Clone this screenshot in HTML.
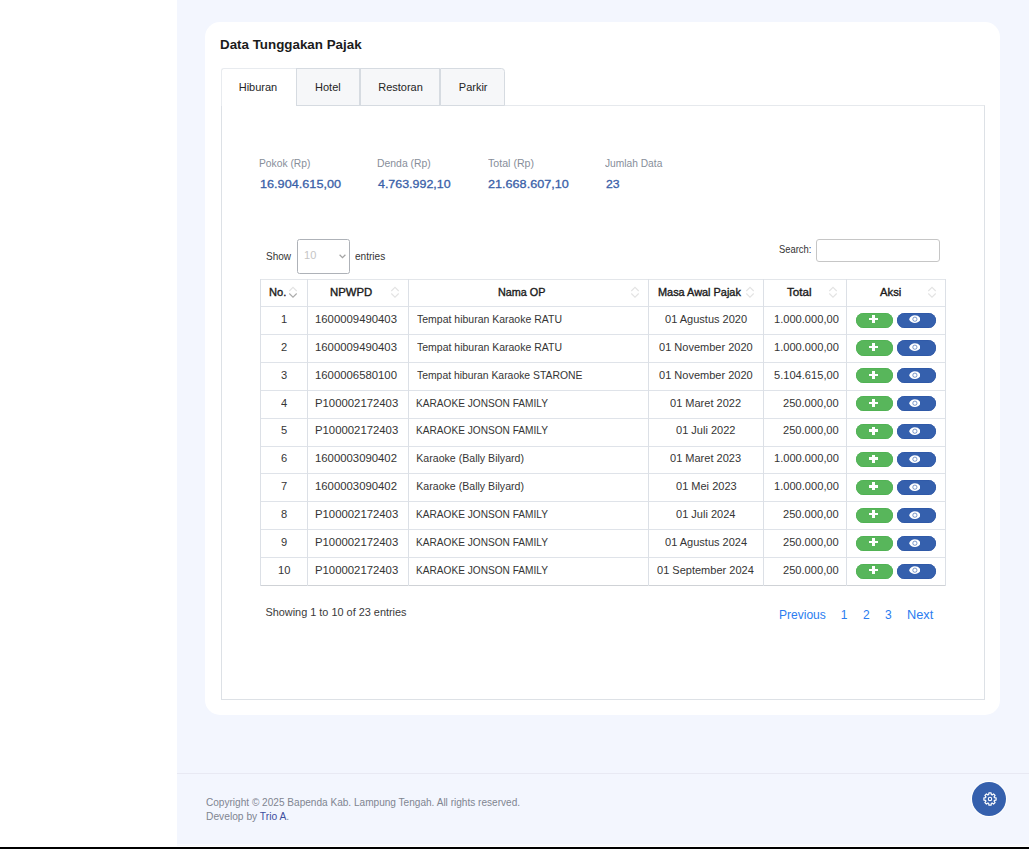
<!DOCTYPE html>
<html><head><meta charset="utf-8"><style>
html,body{margin:0;padding:0;width:1029px;height:849px;overflow:hidden;background:#fff;position:relative}
.t{position:absolute;white-space:nowrap;font-family:"Liberation Sans",sans-serif}
</style></head><body>
<div style="position:absolute;left:0px;top:0px;width:177px;height:849px;background:#fff"></div>
<div style="position:absolute;left:177px;top:0px;width:852px;height:844px;background:#f3f6fe"></div>
<div style="position:absolute;left:177px;top:844px;width:852px;height:1px;background:#fafbff"></div>
<div style="position:absolute;left:177px;top:845px;width:852px;height:1px;background:#f7f8fc"></div>
<div style="position:absolute;left:0px;top:846px;width:1029px;height:1px;background:#fff"></div>
<div style="position:absolute;left:0px;top:847px;width:1029px;height:2px;background:#000"></div>
<div style="position:absolute;left:205px;top:22px;width:795px;height:693px;background:#fff;border-radius:15px"></div>
<div class="t" style="left:220.40px;top:38.00px;font-size:13.5px;line-height:13.5px;color:#1b1b1b;font-weight:bold;transform:scaleX(0.99);transform-origin:0 0;">Data Tunggakan Pajak</div>
<div style="position:absolute;left:221px;top:105px;width:764px;height:595px;border:1px solid #dde1e6;border-top-color:#e6e9ed;box-sizing:border-box"></div>
<div style="position:absolute;left:221px;top:68px;width:76px;height:38px;background:#fff;border:1px solid #e8ebef;border-bottom:none;border-right:none;border-radius:3px 0 0 0;box-sizing:border-box"></div>
<div style="position:absolute;left:296px;top:68px;width:64px;height:38px;background:#f6f7f9;border:1px solid #d6dbe1;box-sizing:border-box;border-radius:0"></div>
<div style="position:absolute;left:360px;top:68px;width:80px;height:38px;background:#f6f7f9;border:1px solid #d6dbe1;box-sizing:border-box;border-radius:0"></div>
<div style="position:absolute;left:440px;top:68px;width:65px;height:38px;background:#f6f7f9;border:1px solid #d6dbe1;box-sizing:border-box;border-radius:0 3.5px 0 0"></div>
<div class="t" style="left:238.72px;top:82.00px;font-size:11px;line-height:11px;color:#252525;font-weight:normal;">Hiburan</div>
<div class="t" style="left:315.02px;top:82.00px;font-size:11px;line-height:11px;color:#252525;font-weight:normal;">Hotel</div>
<div class="t" style="left:378.22px;top:82.00px;font-size:11px;line-height:11px;color:#252525;font-weight:normal;">Restoran</div>
<div class="t" style="left:458.82px;top:82.00px;font-size:11px;line-height:11px;color:#252525;font-weight:normal;">Parkir</div>
<div class="t" style="left:259.38px;top:159.00px;font-size:10.4px;line-height:10.4px;color:#878e9a;font-weight:normal;transform:scaleX(0.9894937269418248);transform-origin:0 0;">Pokok (Rp)</div>
<div class="t" style="left:259.96px;top:179.00px;font-size:11.5px;line-height:11.5px;color:#3a5fa8;font-weight:normal;transform:scaleX(1.1020164007253803);transform-origin:0 0;-webkit-text-stroke:0.3px #3a5fa8;">16.904.615,00</div>
<div class="t" style="left:376.97px;top:159.00px;font-size:10.4px;line-height:10.4px;color:#878e9a;font-weight:normal;transform:scaleX(1.002410558724552);transform-origin:0 0;">Denda (Rp)</div>
<div class="t" style="left:378.20px;top:179.00px;font-size:11.5px;line-height:11.5px;color:#3a5fa8;font-weight:normal;transform:scaleX(1.0811831608471705);transform-origin:0 0;-webkit-text-stroke:0.3px #3a5fa8;">4.763.992,10</div>
<div class="t" style="left:487.99px;top:159.00px;font-size:10.4px;line-height:10.4px;color:#878e9a;font-weight:normal;transform:scaleX(1.0221295705765452);transform-origin:0 0;">Total (Rp)</div>
<div class="t" style="left:487.72px;top:179.00px;font-size:11.5px;line-height:11.5px;color:#3a5fa8;font-weight:normal;transform:scaleX(1.0985228530948044);transform-origin:0 0;-webkit-text-stroke:0.3px #3a5fa8;">21.668.607,10</div>
<div class="t" style="left:605.30px;top:159.00px;font-size:10.4px;line-height:10.4px;color:#878e9a;font-weight:normal;transform:scaleX(0.9825234498704609);transform-origin:0 0;">Jumlah Data</div>
<div class="t" style="left:605.54px;top:179.00px;font-size:11.5px;line-height:11.5px;color:#3a5fa8;font-weight:normal;transform:scaleX(1.0592545330714989);transform-origin:0 0;-webkit-text-stroke:0.3px #3a5fa8;">23</div>
<div class="t" style="left:265.50px;top:251.00px;font-size:10.5px;line-height:10.5px;color:#333;font-weight:normal;transform:scaleX(0.955);transform-origin:0 0;">Show</div>
<div style="position:absolute;left:297px;top:239px;width:53px;height:34.5px;border:1px solid #aeb2b8;border-radius:2.5px;box-sizing:border-box;background:#fff"></div>
<div class="t" style="left:303.53px;top:250.00px;font-size:10.5px;line-height:10.5px;color:#c5c5c5;font-weight:normal;transform:scaleX(1.05);transform-origin:0 0;">10</div>
<svg style="position:absolute;left:339px;top:254px" width="7" height="5" viewBox="0 0 7 5"><path d="M0.6 0.8 L3.5 3.7 L6.4 0.8" fill="none" stroke="#a4a4a4" stroke-width="1.25"/></svg>
<div class="t" style="left:354.50px;top:251.00px;font-size:10.5px;line-height:10.5px;color:#333;font-weight:normal;transform:scaleX(0.96);transform-origin:0 0;">entries</div>
<div class="t" style="left:778.52px;top:245.00px;font-size:10.3px;line-height:10.3px;color:#333;font-weight:normal;transform:scaleX(0.9109684652445705);transform-origin:0 0;">Search:</div>
<div style="position:absolute;left:816px;top:239px;width:124px;height:22.5px;border:1px solid #c6c6c6;border-radius:3px;box-sizing:border-box;background:#fff"></div>
<div style="position:absolute;left:260px;top:279px;width:686px;height:1px;background:#e3e6ea"></div>
<div style="position:absolute;left:260px;top:306px;width:686px;height:1px;background:#dfe3e9"></div>
<div style="position:absolute;left:260px;top:334px;width:686px;height:1px;background:#dfe3e9"></div>
<div style="position:absolute;left:260px;top:362px;width:686px;height:1px;background:#dfe3e9"></div>
<div style="position:absolute;left:260px;top:390px;width:686px;height:1px;background:#dfe3e9"></div>
<div style="position:absolute;left:260px;top:418px;width:686px;height:1px;background:#dfe3e9"></div>
<div style="position:absolute;left:260px;top:446px;width:686px;height:1px;background:#dfe3e9"></div>
<div style="position:absolute;left:260px;top:473px;width:686px;height:1px;background:#dfe3e9"></div>
<div style="position:absolute;left:260px;top:501px;width:686px;height:1px;background:#dfe3e9"></div>
<div style="position:absolute;left:260px;top:529px;width:686px;height:1px;background:#dfe3e9"></div>
<div style="position:absolute;left:260px;top:557px;width:686px;height:1px;background:#dfe3e9"></div>
<div style="position:absolute;left:260px;top:585px;width:686px;height:1px;background:#cfd2d6"></div>
<div style="position:absolute;left:260px;top:279px;width:1px;height:307px;background:#dce0e6"></div>
<div style="position:absolute;left:307px;top:279px;width:1px;height:307px;background:#dce0e6"></div>
<div style="position:absolute;left:408px;top:279px;width:1px;height:307px;background:#dce0e6"></div>
<div style="position:absolute;left:648px;top:279px;width:1px;height:307px;background:#dce0e6"></div>
<div style="position:absolute;left:763px;top:279px;width:1px;height:307px;background:#dce0e6"></div>
<div style="position:absolute;left:846px;top:279px;width:1px;height:307px;background:#dce0e6"></div>
<div style="position:absolute;left:945px;top:279px;width:1px;height:307px;background:#dce0e6"></div>
<div class="t" style="left:269.49px;top:288.00px;font-size:10.3px;line-height:10.3px;color:#1b1b1b;font-weight:normal;transform:scaleX(1.0769457290267523);transform-origin:0 0;-webkit-text-stroke:0.35px #1b1b1b;">No.</div>
<div class="t" style="left:330.17px;top:288.00px;font-size:10.3px;line-height:10.3px;color:#1b1b1b;font-weight:normal;transform:scaleX(1.1030204962243795);transform-origin:0 0;-webkit-text-stroke:0.35px #1b1b1b;">NPWPD</div>
<div class="t" style="left:498.11px;top:288.00px;font-size:10.3px;line-height:10.3px;color:#1b1b1b;font-weight:normal;transform:scaleX(1.0475880854469268);transform-origin:0 0;-webkit-text-stroke:0.35px #1b1b1b;">Nama OP</div>
<div class="t" style="left:658.00px;top:288.00px;font-size:10.3px;line-height:10.3px;color:#1b1b1b;font-weight:normal;transform:scaleX(1.0589922541633425);transform-origin:0 0;-webkit-text-stroke:0.35px #1b1b1b;">Masa Awal Pajak</div>
<div class="t" style="left:786.74px;top:288.00px;font-size:10.3px;line-height:10.3px;color:#1b1b1b;font-weight:normal;transform:scaleX(1.1286245476773185);transform-origin:0 0;-webkit-text-stroke:0.35px #1b1b1b;">Total</div>
<div class="t" style="left:879.57px;top:288.00px;font-size:10.3px;line-height:10.3px;color:#1b1b1b;font-weight:normal;transform:scaleX(1.0946954309294243);transform-origin:0 0;-webkit-text-stroke:0.35px #1b1b1b;">Aksi</div>
<svg style="position:absolute;left:288px;top:286px" width="10" height="13" viewBox="0 0 10 13"><path d="M1.3 5 L5 1.3 L8.7 5" fill="none" stroke="#e3e3e3" stroke-width="1.1"/><path d="M1.3 7.5 L5 11.2 L8.7 7.5" fill="none" stroke="#ababab" stroke-width="1.1"/></svg>
<svg style="position:absolute;left:390px;top:286px" width="10" height="13" viewBox="0 0 10 13"><path d="M1.3 5 L5 1.3 L8.7 5" fill="none" stroke="#e3e3e3" stroke-width="1.1"/><path d="M1.3 7.5 L5 11.2 L8.7 7.5" fill="none" stroke="#e3e3e3" stroke-width="1.1"/></svg>
<svg style="position:absolute;left:630px;top:286px" width="10" height="13" viewBox="0 0 10 13"><path d="M1.3 5 L5 1.3 L8.7 5" fill="none" stroke="#e3e3e3" stroke-width="1.1"/><path d="M1.3 7.5 L5 11.2 L8.7 7.5" fill="none" stroke="#e3e3e3" stroke-width="1.1"/></svg>
<svg style="position:absolute;left:745px;top:286px" width="10" height="13" viewBox="0 0 10 13"><path d="M1.3 5 L5 1.3 L8.7 5" fill="none" stroke="#e3e3e3" stroke-width="1.1"/><path d="M1.3 7.5 L5 11.2 L8.7 7.5" fill="none" stroke="#e3e3e3" stroke-width="1.1"/></svg>
<svg style="position:absolute;left:828px;top:286px" width="10" height="13" viewBox="0 0 10 13"><path d="M1.3 5 L5 1.3 L8.7 5" fill="none" stroke="#e3e3e3" stroke-width="1.1"/><path d="M1.3 7.5 L5 11.2 L8.7 7.5" fill="none" stroke="#e3e3e3" stroke-width="1.1"/></svg>
<svg style="position:absolute;left:927px;top:286px" width="10" height="13" viewBox="0 0 10 13"><path d="M1.3 5 L5 1.3 L8.7 5" fill="none" stroke="#e3e3e3" stroke-width="1.1"/><path d="M1.3 7.5 L5 11.2 L8.7 7.5" fill="none" stroke="#e3e3e3" stroke-width="1.1"/></svg>
<div class="t" style="left:280.77px;top:314.00px;font-size:10.6px;line-height:10.6px;color:#353535;font-weight:normal;transform:scaleX(1.05);transform-origin:0 0;">1</div>
<div class="t" style="left:314.91px;top:314.00px;font-size:10.6px;line-height:10.6px;color:#353535;font-weight:normal;transform:scaleX(1.07);transform-origin:0 0;">1600009490403</div>
<div class="t" style="left:416.89px;top:314.00px;font-size:10.6px;line-height:10.6px;color:#353535;font-weight:normal;transform:scaleX(0.99);transform-origin:0 0;">Tempat hiburan Karaoke RATU</div>
<div class="t" style="left:664.56px;top:314.00px;font-size:10.6px;line-height:10.6px;color:#353535;font-weight:normal;transform:scaleX(1.04);transform-origin:0 0;">01 Agustus 2020</div>
<div class="t" style="left:773.64px;top:314.00px;font-size:10.6px;line-height:10.6px;color:#353535;font-weight:normal;transform:scaleX(1.048);transform-origin:0 0;">1.000.000,00</div>
<div style="position:absolute;left:855.7px;top:312.50px;width:37.5px;height:15.2px;border-radius:8px;background:#58b65b;box-shadow:inset 0 0 0 0.6px #4aae4e"></div>
<div style="position:absolute;left:896.6px;top:312.50px;width:39.7px;height:15.2px;border-radius:8px;background:#3560ad;box-shadow:inset 0 0 0 0.6px #2d55a3"></div>
<div style="position:absolute;left:871.6px;top:315.00px;width:3px;height:8px;background:#fff"></div>
<div style="position:absolute;left:868.5px;top:317.80px;width:9.3px;height:2.4px;background:#fff"></div>
<svg style="position:absolute;left:908.7px;top:315.30px" width="11.8" height="8.4" viewBox="0 0 11.8 8.4"><path d="M0.1 4.2 C1.9 -0.9 9.9 -0.9 11.7 4.2 C9.9 9.3 1.9 9.3 0.1 4.2 Z" fill="#fff"/><circle cx="5.9" cy="4.2" r="2.1" fill="none" stroke="#3560ad" stroke-opacity="0.85" stroke-width="0.75"/></svg>
<div class="t" style="left:280.88px;top:342.00px;font-size:10.6px;line-height:10.6px;color:#353535;font-weight:normal;transform:scaleX(1.05);transform-origin:0 0;">2</div>
<div class="t" style="left:314.91px;top:342.00px;font-size:10.6px;line-height:10.6px;color:#353535;font-weight:normal;transform:scaleX(1.07);transform-origin:0 0;">1600009490403</div>
<div class="t" style="left:416.89px;top:342.00px;font-size:10.6px;line-height:10.6px;color:#353535;font-weight:normal;transform:scaleX(0.99);transform-origin:0 0;">Tempat hiburan Karaoke RATU</div>
<div class="t" style="left:659.05px;top:342.00px;font-size:10.6px;line-height:10.6px;color:#353535;font-weight:normal;transform:scaleX(1.04);transform-origin:0 0;">01 November 2020</div>
<div class="t" style="left:773.64px;top:342.00px;font-size:10.6px;line-height:10.6px;color:#353535;font-weight:normal;transform:scaleX(1.048);transform-origin:0 0;">1.000.000,00</div>
<div style="position:absolute;left:855.7px;top:340.40px;width:37.5px;height:15.2px;border-radius:8px;background:#58b65b;box-shadow:inset 0 0 0 0.6px #4aae4e"></div>
<div style="position:absolute;left:896.6px;top:340.40px;width:39.7px;height:15.2px;border-radius:8px;background:#3560ad;box-shadow:inset 0 0 0 0.6px #2d55a3"></div>
<div style="position:absolute;left:871.6px;top:342.90px;width:3px;height:8px;background:#fff"></div>
<div style="position:absolute;left:868.5px;top:345.70px;width:9.3px;height:2.4px;background:#fff"></div>
<svg style="position:absolute;left:908.7px;top:343.20px" width="11.8" height="8.4" viewBox="0 0 11.8 8.4"><path d="M0.1 4.2 C1.9 -0.9 9.9 -0.9 11.7 4.2 C9.9 9.3 1.9 9.3 0.1 4.2 Z" fill="#fff"/><circle cx="5.9" cy="4.2" r="2.1" fill="none" stroke="#3560ad" stroke-opacity="0.85" stroke-width="0.75"/></svg>
<div class="t" style="left:280.94px;top:370.00px;font-size:10.6px;line-height:10.6px;color:#353535;font-weight:normal;transform:scaleX(1.05);transform-origin:0 0;">3</div>
<div class="t" style="left:314.91px;top:370.00px;font-size:10.6px;line-height:10.6px;color:#353535;font-weight:normal;transform:scaleX(1.07);transform-origin:0 0;">1600006580100</div>
<div class="t" style="left:416.89px;top:370.00px;font-size:10.6px;line-height:10.6px;color:#353535;font-weight:normal;transform:scaleX(0.98);transform-origin:0 0;">Tempat hiburan Karaoke STARONE</div>
<div class="t" style="left:659.05px;top:370.00px;font-size:10.6px;line-height:10.6px;color:#353535;font-weight:normal;transform:scaleX(1.04);transform-origin:0 0;">01 November 2020</div>
<div class="t" style="left:773.64px;top:370.00px;font-size:10.6px;line-height:10.6px;color:#353535;font-weight:normal;transform:scaleX(1.048);transform-origin:0 0;">5.104.615,00</div>
<div style="position:absolute;left:855.7px;top:368.30px;width:37.5px;height:15.2px;border-radius:8px;background:#58b65b;box-shadow:inset 0 0 0 0.6px #4aae4e"></div>
<div style="position:absolute;left:896.6px;top:368.30px;width:39.7px;height:15.2px;border-radius:8px;background:#3560ad;box-shadow:inset 0 0 0 0.6px #2d55a3"></div>
<div style="position:absolute;left:871.6px;top:370.80px;width:3px;height:8px;background:#fff"></div>
<div style="position:absolute;left:868.5px;top:373.60px;width:9.3px;height:2.4px;background:#fff"></div>
<svg style="position:absolute;left:908.7px;top:371.10px" width="11.8" height="8.4" viewBox="0 0 11.8 8.4"><path d="M0.1 4.2 C1.9 -0.9 9.9 -0.9 11.7 4.2 C9.9 9.3 1.9 9.3 0.1 4.2 Z" fill="#fff"/><circle cx="5.9" cy="4.2" r="2.1" fill="none" stroke="#3560ad" stroke-opacity="0.85" stroke-width="0.75"/></svg>
<div class="t" style="left:280.94px;top:398.00px;font-size:10.6px;line-height:10.6px;color:#353535;font-weight:normal;transform:scaleX(1.05);transform-origin:0 0;">4</div>
<div class="t" style="left:314.79px;top:398.00px;font-size:10.6px;line-height:10.6px;color:#353535;font-weight:normal;transform:scaleX(1.07);transform-origin:0 0;">P100002172403</div>
<div class="t" style="left:416.29px;top:398.00px;font-size:10.6px;line-height:10.6px;color:#353535;font-weight:normal;transform:scaleX(0.955);transform-origin:0 0;">KARAOKE JONSON FAMILY</div>
<div class="t" style="left:670.44px;top:398.00px;font-size:10.6px;line-height:10.6px;color:#353535;font-weight:normal;transform:scaleX(1.04);transform-origin:0 0;">01 Maret 2022</div>
<div class="t" style="left:782.90px;top:398.00px;font-size:10.6px;line-height:10.6px;color:#353535;font-weight:normal;transform:scaleX(1.048);transform-origin:0 0;">250.000,00</div>
<div style="position:absolute;left:855.7px;top:396.20px;width:37.5px;height:15.2px;border-radius:8px;background:#58b65b;box-shadow:inset 0 0 0 0.6px #4aae4e"></div>
<div style="position:absolute;left:896.6px;top:396.20px;width:39.7px;height:15.2px;border-radius:8px;background:#3560ad;box-shadow:inset 0 0 0 0.6px #2d55a3"></div>
<div style="position:absolute;left:871.6px;top:398.70px;width:3px;height:8px;background:#fff"></div>
<div style="position:absolute;left:868.5px;top:401.50px;width:9.3px;height:2.4px;background:#fff"></div>
<svg style="position:absolute;left:908.7px;top:399.00px" width="11.8" height="8.4" viewBox="0 0 11.8 8.4"><path d="M0.1 4.2 C1.9 -0.9 9.9 -0.9 11.7 4.2 C9.9 9.3 1.9 9.3 0.1 4.2 Z" fill="#fff"/><circle cx="5.9" cy="4.2" r="2.1" fill="none" stroke="#3560ad" stroke-opacity="0.85" stroke-width="0.75"/></svg>
<div class="t" style="left:280.88px;top:425.00px;font-size:10.6px;line-height:10.6px;color:#353535;font-weight:normal;transform:scaleX(1.05);transform-origin:0 0;">5</div>
<div class="t" style="left:314.79px;top:425.00px;font-size:10.6px;line-height:10.6px;color:#353535;font-weight:normal;transform:scaleX(1.07);transform-origin:0 0;">P100002172403</div>
<div class="t" style="left:416.29px;top:425.00px;font-size:10.6px;line-height:10.6px;color:#353535;font-weight:normal;transform:scaleX(0.955);transform-origin:0 0;">KARAOKE JONSON FAMILY</div>
<div class="t" style="left:676.26px;top:425.00px;font-size:10.6px;line-height:10.6px;color:#353535;font-weight:normal;transform:scaleX(1.04);transform-origin:0 0;">01 Juli 2022</div>
<div class="t" style="left:782.90px;top:425.00px;font-size:10.6px;line-height:10.6px;color:#353535;font-weight:normal;transform:scaleX(1.048);transform-origin:0 0;">250.000,00</div>
<div style="position:absolute;left:855.7px;top:424.10px;width:37.5px;height:15.2px;border-radius:8px;background:#58b65b;box-shadow:inset 0 0 0 0.6px #4aae4e"></div>
<div style="position:absolute;left:896.6px;top:424.10px;width:39.7px;height:15.2px;border-radius:8px;background:#3560ad;box-shadow:inset 0 0 0 0.6px #2d55a3"></div>
<div style="position:absolute;left:871.6px;top:426.60px;width:3px;height:8px;background:#fff"></div>
<div style="position:absolute;left:868.5px;top:429.40px;width:9.3px;height:2.4px;background:#fff"></div>
<svg style="position:absolute;left:908.7px;top:426.90px" width="11.8" height="8.4" viewBox="0 0 11.8 8.4"><path d="M0.1 4.2 C1.9 -0.9 9.9 -0.9 11.7 4.2 C9.9 9.3 1.9 9.3 0.1 4.2 Z" fill="#fff"/><circle cx="5.9" cy="4.2" r="2.1" fill="none" stroke="#3560ad" stroke-opacity="0.85" stroke-width="0.75"/></svg>
<div class="t" style="left:280.83px;top:453.00px;font-size:10.6px;line-height:10.6px;color:#353535;font-weight:normal;transform:scaleX(1.05);transform-origin:0 0;">6</div>
<div class="t" style="left:314.91px;top:453.00px;font-size:10.6px;line-height:10.6px;color:#353535;font-weight:normal;transform:scaleX(1.07);transform-origin:0 0;">1600003090402</div>
<div class="t" style="left:416.25px;top:453.00px;font-size:10.6px;line-height:10.6px;color:#353535;font-weight:normal;">Karaoke (Bally Bilyard)</div>
<div class="t" style="left:670.39px;top:453.00px;font-size:10.6px;line-height:10.6px;color:#353535;font-weight:normal;transform:scaleX(1.04);transform-origin:0 0;">01 Maret 2023</div>
<div class="t" style="left:773.64px;top:453.00px;font-size:10.6px;line-height:10.6px;color:#353535;font-weight:normal;transform:scaleX(1.048);transform-origin:0 0;">1.000.000,00</div>
<div style="position:absolute;left:855.7px;top:452.00px;width:37.5px;height:15.2px;border-radius:8px;background:#58b65b;box-shadow:inset 0 0 0 0.6px #4aae4e"></div>
<div style="position:absolute;left:896.6px;top:452.00px;width:39.7px;height:15.2px;border-radius:8px;background:#3560ad;box-shadow:inset 0 0 0 0.6px #2d55a3"></div>
<div style="position:absolute;left:871.6px;top:454.50px;width:3px;height:8px;background:#fff"></div>
<div style="position:absolute;left:868.5px;top:457.30px;width:9.3px;height:2.4px;background:#fff"></div>
<svg style="position:absolute;left:908.7px;top:454.80px" width="11.8" height="8.4" viewBox="0 0 11.8 8.4"><path d="M0.1 4.2 C1.9 -0.9 9.9 -0.9 11.7 4.2 C9.9 9.3 1.9 9.3 0.1 4.2 Z" fill="#fff"/><circle cx="5.9" cy="4.2" r="2.1" fill="none" stroke="#3560ad" stroke-opacity="0.85" stroke-width="0.75"/></svg>
<div class="t" style="left:280.88px;top:481.00px;font-size:10.6px;line-height:10.6px;color:#353535;font-weight:normal;transform:scaleX(1.05);transform-origin:0 0;">7</div>
<div class="t" style="left:314.91px;top:481.00px;font-size:10.6px;line-height:10.6px;color:#353535;font-weight:normal;transform:scaleX(1.07);transform-origin:0 0;">1600003090402</div>
<div class="t" style="left:416.25px;top:481.00px;font-size:10.6px;line-height:10.6px;color:#353535;font-weight:normal;">Karaoke (Bally Bilyard)</div>
<div class="t" style="left:675.60px;top:481.00px;font-size:10.6px;line-height:10.6px;color:#353535;font-weight:normal;transform:scaleX(1.04);transform-origin:0 0;">01 Mei 2023</div>
<div class="t" style="left:773.64px;top:481.00px;font-size:10.6px;line-height:10.6px;color:#353535;font-weight:normal;transform:scaleX(1.048);transform-origin:0 0;">1.000.000,00</div>
<div style="position:absolute;left:855.7px;top:479.90px;width:37.5px;height:15.2px;border-radius:8px;background:#58b65b;box-shadow:inset 0 0 0 0.6px #4aae4e"></div>
<div style="position:absolute;left:896.6px;top:479.90px;width:39.7px;height:15.2px;border-radius:8px;background:#3560ad;box-shadow:inset 0 0 0 0.6px #2d55a3"></div>
<div style="position:absolute;left:871.6px;top:482.40px;width:3px;height:8px;background:#fff"></div>
<div style="position:absolute;left:868.5px;top:485.20px;width:9.3px;height:2.4px;background:#fff"></div>
<svg style="position:absolute;left:908.7px;top:482.70px" width="11.8" height="8.4" viewBox="0 0 11.8 8.4"><path d="M0.1 4.2 C1.9 -0.9 9.9 -0.9 11.7 4.2 C9.9 9.3 1.9 9.3 0.1 4.2 Z" fill="#fff"/><circle cx="5.9" cy="4.2" r="2.1" fill="none" stroke="#3560ad" stroke-opacity="0.85" stroke-width="0.75"/></svg>
<div class="t" style="left:280.88px;top:509.00px;font-size:10.6px;line-height:10.6px;color:#353535;font-weight:normal;transform:scaleX(1.05);transform-origin:0 0;">8</div>
<div class="t" style="left:314.79px;top:509.00px;font-size:10.6px;line-height:10.6px;color:#353535;font-weight:normal;transform:scaleX(1.07);transform-origin:0 0;">P100002172403</div>
<div class="t" style="left:416.29px;top:509.00px;font-size:10.6px;line-height:10.6px;color:#353535;font-weight:normal;transform:scaleX(0.955);transform-origin:0 0;">KARAOKE JONSON FAMILY</div>
<div class="t" style="left:676.15px;top:509.00px;font-size:10.6px;line-height:10.6px;color:#353535;font-weight:normal;transform:scaleX(1.04);transform-origin:0 0;">01 Juli 2024</div>
<div class="t" style="left:782.90px;top:509.00px;font-size:10.6px;line-height:10.6px;color:#353535;font-weight:normal;transform:scaleX(1.048);transform-origin:0 0;">250.000,00</div>
<div style="position:absolute;left:855.7px;top:507.80px;width:37.5px;height:15.2px;border-radius:8px;background:#58b65b;box-shadow:inset 0 0 0 0.6px #4aae4e"></div>
<div style="position:absolute;left:896.6px;top:507.80px;width:39.7px;height:15.2px;border-radius:8px;background:#3560ad;box-shadow:inset 0 0 0 0.6px #2d55a3"></div>
<div style="position:absolute;left:871.6px;top:510.30px;width:3px;height:8px;background:#fff"></div>
<div style="position:absolute;left:868.5px;top:513.10px;width:9.3px;height:2.4px;background:#fff"></div>
<svg style="position:absolute;left:908.7px;top:510.60px" width="11.8" height="8.4" viewBox="0 0 11.8 8.4"><path d="M0.1 4.2 C1.9 -0.9 9.9 -0.9 11.7 4.2 C9.9 9.3 1.9 9.3 0.1 4.2 Z" fill="#fff"/><circle cx="5.9" cy="4.2" r="2.1" fill="none" stroke="#3560ad" stroke-opacity="0.85" stroke-width="0.75"/></svg>
<div class="t" style="left:280.94px;top:537.00px;font-size:10.6px;line-height:10.6px;color:#353535;font-weight:normal;transform:scaleX(1.05);transform-origin:0 0;">9</div>
<div class="t" style="left:314.79px;top:537.00px;font-size:10.6px;line-height:10.6px;color:#353535;font-weight:normal;transform:scaleX(1.07);transform-origin:0 0;">P100002172403</div>
<div class="t" style="left:416.29px;top:537.00px;font-size:10.6px;line-height:10.6px;color:#353535;font-weight:normal;transform:scaleX(0.955);transform-origin:0 0;">KARAOKE JONSON FAMILY</div>
<div class="t" style="left:664.51px;top:537.00px;font-size:10.6px;line-height:10.6px;color:#353535;font-weight:normal;transform:scaleX(1.04);transform-origin:0 0;">01 Agustus 2024</div>
<div class="t" style="left:782.90px;top:537.00px;font-size:10.6px;line-height:10.6px;color:#353535;font-weight:normal;transform:scaleX(1.048);transform-origin:0 0;">250.000,00</div>
<div style="position:absolute;left:855.7px;top:535.70px;width:37.5px;height:15.2px;border-radius:8px;background:#58b65b;box-shadow:inset 0 0 0 0.6px #4aae4e"></div>
<div style="position:absolute;left:896.6px;top:535.70px;width:39.7px;height:15.2px;border-radius:8px;background:#3560ad;box-shadow:inset 0 0 0 0.6px #2d55a3"></div>
<div style="position:absolute;left:871.6px;top:538.20px;width:3px;height:8px;background:#fff"></div>
<div style="position:absolute;left:868.5px;top:541.00px;width:9.3px;height:2.4px;background:#fff"></div>
<svg style="position:absolute;left:908.7px;top:538.50px" width="11.8" height="8.4" viewBox="0 0 11.8 8.4"><path d="M0.1 4.2 C1.9 -0.9 9.9 -0.9 11.7 4.2 C9.9 9.3 1.9 9.3 0.1 4.2 Z" fill="#fff"/><circle cx="5.9" cy="4.2" r="2.1" fill="none" stroke="#3560ad" stroke-opacity="0.85" stroke-width="0.75"/></svg>
<div class="t" style="left:277.62px;top:565.00px;font-size:10.6px;line-height:10.6px;color:#353535;font-weight:normal;transform:scaleX(1.05);transform-origin:0 0;">10</div>
<div class="t" style="left:314.79px;top:565.00px;font-size:10.6px;line-height:10.6px;color:#353535;font-weight:normal;transform:scaleX(1.07);transform-origin:0 0;">P100002172403</div>
<div class="t" style="left:416.29px;top:565.00px;font-size:10.6px;line-height:10.6px;color:#353535;font-weight:normal;transform:scaleX(0.955);transform-origin:0 0;">KARAOKE JONSON FAMILY</div>
<div class="t" style="left:657.46px;top:565.00px;font-size:10.6px;line-height:10.6px;color:#353535;font-weight:normal;transform:scaleX(1.04);transform-origin:0 0;">01 September 2024</div>
<div class="t" style="left:782.90px;top:565.00px;font-size:10.6px;line-height:10.6px;color:#353535;font-weight:normal;transform:scaleX(1.048);transform-origin:0 0;">250.000,00</div>
<div style="position:absolute;left:855.7px;top:563.60px;width:37.5px;height:15.2px;border-radius:8px;background:#58b65b;box-shadow:inset 0 0 0 0.6px #4aae4e"></div>
<div style="position:absolute;left:896.6px;top:563.60px;width:39.7px;height:15.2px;border-radius:8px;background:#3560ad;box-shadow:inset 0 0 0 0.6px #2d55a3"></div>
<div style="position:absolute;left:871.6px;top:566.10px;width:3px;height:8px;background:#fff"></div>
<div style="position:absolute;left:868.5px;top:568.90px;width:9.3px;height:2.4px;background:#fff"></div>
<svg style="position:absolute;left:908.7px;top:566.40px" width="11.8" height="8.4" viewBox="0 0 11.8 8.4"><path d="M0.1 4.2 C1.9 -0.9 9.9 -0.9 11.7 4.2 C9.9 9.3 1.9 9.3 0.1 4.2 Z" fill="#fff"/><circle cx="5.9" cy="4.2" r="2.1" fill="none" stroke="#3560ad" stroke-opacity="0.85" stroke-width="0.75"/></svg>
<div class="t" style="left:265.46px;top:607.00px;font-size:10.9px;line-height:10.9px;color:#3a3a3a;font-weight:normal;">Showing 1 to 10 of 23 entries</div>
<div class="t" style="left:778.64px;top:609.00px;font-size:12px;line-height:12px;color:#2a7cf0;font-weight:normal;transform:scaleX(1.0029205929354714);transform-origin:0 0;">Previous</div>
<div class="t" style="left:840.86px;top:609.00px;font-size:12px;line-height:12px;color:#2a7cf0;font-weight:normal;">1</div>
<div class="t" style="left:863.00px;top:609.00px;font-size:12px;line-height:12px;color:#2a7cf0;font-weight:normal;">2</div>
<div class="t" style="left:885.04px;top:609.00px;font-size:12px;line-height:12px;color:#2a7cf0;font-weight:normal;">3</div>
<div class="t" style="left:907.18px;top:609.00px;font-size:12px;line-height:12px;color:#2a7cf0;font-weight:normal;transform:scaleX(1.0657188929476402);transform-origin:0 0;">Next</div>
<div style="position:absolute;left:177px;top:773px;width:852px;height:1px;background:#e8e9f3"></div>
<div class="t" style="left:206.30px;top:798.00px;font-size:10.4px;line-height:10.4px;color:#7f8591;font-weight:normal;transform:scaleX(0.9693091374264912);transform-origin:0 0;">Copyright © 2025 Bapenda Kab. Lampung Tengah. All rights reserved.</div>
<div class="t" style="left:205.98px;top:812.00px;font-size:10.4px;line-height:10.4px;color:#7f8591;font-weight:normal;transform:scaleX(0.985);transform-origin:0 0;">Develop by <span style="color:#3d4e9e">Trio A</span>.</div>
<div style="position:absolute;left:971px;top:780.8px;width:36px;height:36px;border-radius:50%;background:#fff"></div>
<div style="position:absolute;left:972px;top:781.8px;width:34px;height:34px;border-radius:50%;background:#3560ad"></div>
<svg style="position:absolute;left:982.5px;top:792.3px" width="14" height="14" viewBox="0 0 14 14"><polygon points="5.66,2.60 5.91,0.90 8.09,0.90 8.34,2.60 9.17,2.94 10.55,1.91 12.09,3.45 11.06,4.83 11.40,5.66 13.10,5.91 13.10,8.09 11.40,8.34 11.06,9.17 12.09,10.55 10.55,12.09 9.17,11.06 8.34,11.40 8.09,13.10 5.91,13.10 5.66,11.40 4.83,11.06 3.45,12.09 1.91,10.55 2.94,9.17 2.60,8.34 0.90,8.09 0.90,5.91 2.60,5.66 2.94,4.83 1.91,3.45 3.45,1.91 4.83,2.94" fill="none" stroke="#fff" stroke-width="1.2" stroke-linejoin="round"/><circle cx="7" cy="7" r="1.7" fill="none" stroke="#fff" stroke-width="1.1"/></svg>
</body></html>
